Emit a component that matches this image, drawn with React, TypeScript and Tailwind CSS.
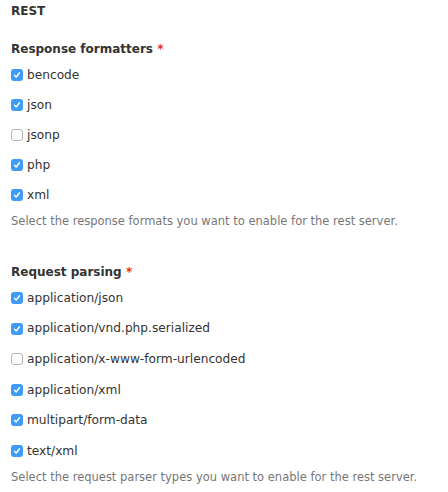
const formatters = [
  { label: "bencode", checked: true },
  { label: "json", checked: true },
  { label: "jsonp", checked: false },
  { label: "php", checked: true },
  { label: "xml", checked: true },
];

const parsers = [
  { label: "application/json", checked: true },
  { label: "application/vnd.php.serialized", checked: true },
  { label: "application/x-www-form-urlencoded", checked: false },
  { label: "application/xml", checked: true },
  { label: "multipart/form-data", checked: true },
  { label: "text/xml", checked: true },
];

function Box({ checked }: { checked: boolean }) {
  if (!checked) {
    return <span className="block w-[12px] h-[12px] rounded-[3px] border border-[#b5b5b5] bg-white" />;
  }
  return (
    <span className="flex items-center justify-center w-[12px] h-[12px] rounded-[3px] bg-[#3e9bf7]">
      <svg width="8" height="8" viewBox="0 0 8 8" fill="none">
        <path d="M1.5 4.2 L3.2 6 L6.5 1.8" stroke="white" strokeWidth="1.4" strokeLinecap="round" strokeLinejoin="round" />
      </svg>
    </span>
  );
}

function Group({
  title,
  items,
  help,
  gap,
}: {
  title: string;
  items: { label: string; checked: boolean }[];
  help: string;
  gap: string;
}) {
  return (
    <div>
      <div className="text-[12px] font-bold text-[#333] leading-[18px]">
        {title} <span className="text-[#e0301e]">*</span>
      </div>
      <div className={`mt-[8px] flex flex-col ${gap}`}>
        {items.map((it) => (
          <label key={it.label} className="flex items-center gap-[4px] h-[18px] text-[12.2px] text-[#333]">
            <Box checked={it.checked} />
            <span>{it.label}</span>
          </label>
        ))}
      </div>
      <p className="mt-[8px] text-[11.5px] text-[#777] leading-[18px]">{help}</p>
    </div>
  );
}

export default function App() {
  return (
    <div className="w-[448px] h-[492px] bg-white px-[11px] pt-[2px]" style={{ fontFamily: '"DejaVu Sans", sans-serif' }}>
      <div className="text-[12px] font-bold text-[#333] leading-[18px]">REST</div>
      <div className="mt-[20px]">
        <Group
          title="Response formatters"
          items={formatters}
          help="Select the response formats you want to enable for the rest server."
          gap="gap-[12px]"
        />
      </div>
      <div className="mt-[33px]">
        <Group
          title="Request parsing"
          items={parsers}
          help="Select the request parser types you want to enable for the rest server."
          gap="gap-[12.6px]"
        />
      </div>
    </div>
  );
}
